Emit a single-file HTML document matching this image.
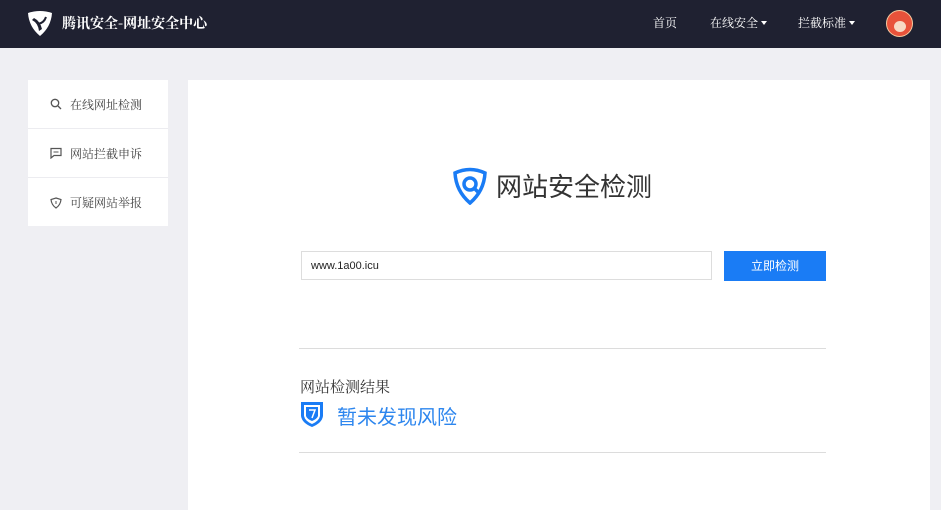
<!DOCTYPE html>
<html><head><meta charset="utf-8"><style>
*{margin:0;padding:0;box-sizing:border-box}
body{width:941px;height:500px;overflow:hidden;background:#efeff3;font-family:"Liberation Sans","Noto Sans CJK SC",sans-serif;position:relative}
.hd{position:absolute;left:0;top:0;width:941px;height:48px;background:#1f2131}
.hd .t{position:absolute;left:62px;top:13px;color:#fff;font-size:14px;font-weight:bold;font-family:"Noto Serif CJK SC",serif}
.nav{position:absolute;top:14px;color:#fff;font-size:12px;font-family:"Noto Serif CJK SC",serif}
.nav i{display:inline-block;width:0;height:0;border-left:3px solid transparent;border-right:3px solid transparent;border-top:4px solid #fff;margin-left:3px;vertical-align:2px}
.side{position:absolute;left:28px;top:80px;width:140px;height:146px;background:#fff}
.side div{height:49px;border-bottom:1px solid #ececf0;font-size:12px;color:#444;display:flex;align-items:center;padding-left:22px;font-family:"Noto Serif CJK SC",serif}
.side div:last-child{border:none}
.side svg{margin-right:8px}
.main{position:absolute;left:188px;top:80px;width:742px;height:430px;background:#fff}
.ttl{position:absolute;left:496px;top:167px;font-size:26px;color:#333}
.in{position:absolute;left:301px;top:251px;width:411px;height:29px;border:1px solid #ddd;font-size:11px;color:#222;padding:8px 9px}
.btn{position:absolute;left:724px;top:251px;width:102px;height:30px;background:#1a7cf5;color:#fff;font-size:12px;text-align:center;line-height:30px}
.ln{position:absolute;left:299px;width:527px;height:1px;background:#dcdcdc}
</style></head><body>
<div class="hd">
<svg style="position:absolute;left:26px;top:9px" width="28" height="28" viewBox="0 0 28 28"><path d="M2 4 Q14 0 26 4 Q25 18 14 27 Q3 18 2 4Z" fill="#fff"/><path d="M8 9 Q14 12 16 20 L13 22 Q12 14 6 11Z" fill="#1f2131"/><path d="M20 8 Q18 14 12 15" stroke="#1f2131" stroke-width="2" fill="none"/></svg>
<div class="t">腾讯安全-网址安全中心</div>
<div class="nav" style="left:653px">首页</div>
<div class="nav" style="left:710px">在线安全<i></i></div>
<div class="nav" style="left:798px">拦截标准<i></i></div>
<div style="position:absolute;left:886px;top:10px;width:27px;height:27px;border-radius:50%;background:#e8523a;border:1px solid #f5c9a0"><div style="position:absolute;left:7px;top:10px;width:12px;height:11px;border-radius:50%;background:#f7d9c4"></div></div>
</div>
<div class="side">
<div><svg width="12" height="12" viewBox="0 0 12 12"><circle cx="5" cy="5" r="3.7" stroke="#555" fill="none" stroke-width="1.3"/><path d="M8 8l3 3" stroke="#555" stroke-width="1.3"/></svg>在线网址检测</div>
<div><svg width="12" height="12" viewBox="0 0 12 12"><path d="M1 1.5h10v7H4l-3 2.5z" stroke="#555" fill="none" stroke-width="1.2"/><path d="M3.5 5h5" stroke="#555"/></svg>网站拦截申诉</div>
<div><svg width="12" height="12" viewBox="0 0 12 12"><path d="M6 1l5 1.5Q10.5 8 6 11Q1.5 8 1 2.5z" stroke="#555" fill="none" stroke-width="1.2"/><path d="M6 4v3" stroke="#555"/></svg>可疑网站举报</div>
</div>
<div class="main"></div>
<svg style="position:absolute;left:452px;top:167px" width="36" height="38" viewBox="0 0 36 38"><path d="M3 6 Q18 -1 33 6 Q32 24 18 36 Q4 24 3 6Z" stroke="#1a7cf5" stroke-width="3.5" fill="none"/><circle cx="18" cy="17" r="6" stroke="#1a7cf5" stroke-width="3.5" fill="none"/><path d="M22 21l5 5" stroke="#1a7cf5" stroke-width="3.5"/></svg>
<div class="ttl">网站安全检测</div>
<div class="in">www.1a00.icu</div>
<div class="btn">立即检测</div>
<div class="ln" style="top:348px"></div>
<div style="position:absolute;left:300px;top:376px;font-size:15px;color:#333;font-family:'Noto Serif CJK SC',serif">网站检测结果</div>
<svg style="position:absolute;left:300px;top:401px" width="24" height="27" viewBox="0 0 24 27"><path d="M1 1h22v14Q22 22 12 26Q2 22 1 15z" fill="#1a7cf5"/><path d="M4 4h16v11Q19 20 12 23Q5 20 4 15z" fill="#fff"/><path d="M6 6h12v9Q17 18 12 20Q7 18 6 15z" fill="#1a7cf5"/><path d="M9 9h6l-3 8" stroke="#fff" stroke-width="1.5" fill="none"/></svg>
<div style="position:absolute;left:337px;top:401px;font-size:20px;color:#2d86ee">暂未发现风险</div>
<div class="ln" style="top:452px"></div>
</body></html>
